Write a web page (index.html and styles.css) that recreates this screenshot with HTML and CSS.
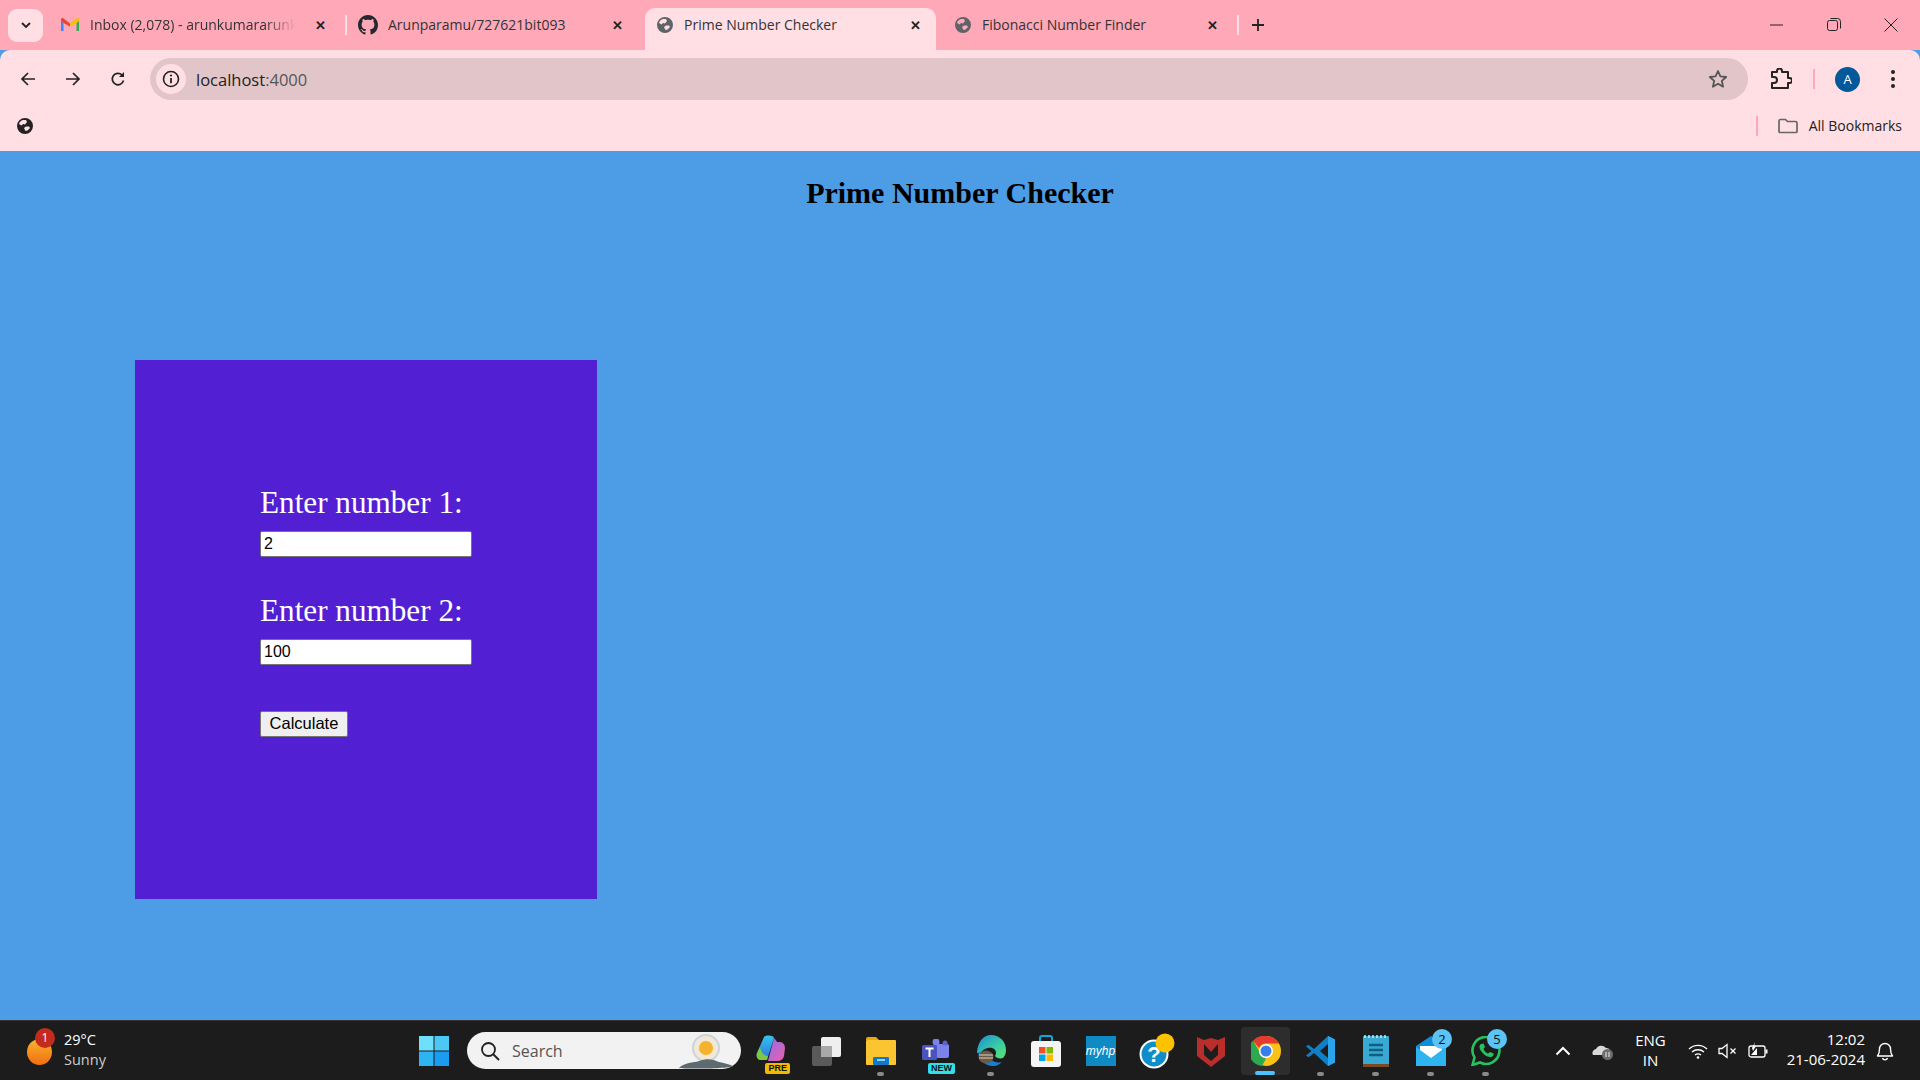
FILE: index.html
```html
<!DOCTYPE html>
<html lang="en">
<head>
    <meta charset="UTF-8">
    <title>Prime Number Checker</title>
    <link rel="stylesheet" href="styles.css">
</head>
<body>

    <!-- Browser tabs -->
    <div class="tabstrip">
        <div class="tab-search">
            <svg width="12" height="12" viewBox="0 0 12 12"><path d="M2 4l4 4 4-4" fill="none" stroke="#222" stroke-width="1.8"/></svg>
        </div>
        <div class="tab tab-gmail">
            <svg class="favicon" width="18" height="14" viewBox="0 0 18 14">
                <path d="M0 13V3l2.5 2v8z" fill="#4285f4"/>
                <path d="M18 13V3l-2.5 2v8z" fill="#34a853"/>
                <path d="M2.5 5L0 3V1.5C0 .2 1.5-.4 2.5.4L9 5.5V8.500z" fill="#ea4335"/>
                <path d="M15.5 5L18 3V1.5C18 .2 16.5-.4 15.5.4L9 5.5V8.500z" fill="#fbbc04"/>
            </svg>
            <span class="tab-title tab-fade">Inbox (2,078) - arunkumararunk</span>
            <span class="tab-close">&#10005;</span>
        </div>
        <div class="tab-sep"></div>
        <div class="tab tab-github">
            <svg class="favicon" width="20" height="20" viewBox="0 0 16 16"><path fill="#24292f" d="M8 0C3.580 0 0 3.580 0 8c0 3.540 2.290 6.530 5.470 7.590.4.070.55-.17.55-.38 0-.19-.01-.82-.01-1.490-2.010.37-2.530-.49-2.690-.94-.09-.23-.48-.94-.82-1.130-.28-.15-.68-.52-.01-.53.630-.01 1.080.58 1.230.82.720 1.210 1.870.87 2.330.66.070-.52.280-.87.510-1.070-1.780-.2-3.640-.89-3.640-3.950 0-.87.310-1.590.82-2.150-.08-.2-.36-1.020.08-2.120 0 0 .67-.21 2.200.82.640-.18 1.320-.27 2-.27s1.360.09 2 .27c1.530-1.040 2.200-.82 2.200-.82.440 1.100.16 1.920.08 2.120.51.560.82 1.270.82 2.150 0 3.070-1.870 3.750-3.650 3.950.29.250.54.730.54 1.480 0 1.070-.01 1.930-.01 2.200 0 .21.150.46.550.38A8.010 8.010 0 0 0 16 8c0-4.420-3.580-8-8-8z"/></svg>
            <span class="tab-title">Arunparamu/727621bit093</span>
            <span class="tab-close">&#10005;</span>
        </div>
        <div class="tab tab-active">
            <svg class="favicon" width="18" height="18" viewBox="0 0 18 18"><use href="#globe" fill="#5f6368"/></svg>
            <span class="tab-title">Prime Number Checker</span>
            <span class="tab-close">&#10005;</span>
        </div>
        <div class="tab tab-fib">
            <svg class="favicon" width="18" height="18" viewBox="0 0 18 18"><use href="#globe" fill="#5f6368"/></svg>
            <span class="tab-title">Fibonacci Number Finder</span>
            <span class="tab-close">&#10005;</span>
        </div>
        <div class="tab-sep"></div>
        <svg class="new-tab" width="14" height="14" viewBox="0 0 14 14"><path d="M7 1v12M1 7h12" stroke="#222" stroke-width="1.8"/></svg>

        <div class="win-controls">
            <svg width="14" height="14" viewBox="0 0 14 14"><path d="M0 7h13" stroke="#222" stroke-width="1"/></svg>
            <svg width="14" height="14" viewBox="0 0 14 14"><rect x=".5" y="2.5" width="10" height="10" rx="2" fill="none" stroke="#222"/><path d="M3.5 .5h7a3 3 0 0 1 3 3v7" fill="none" stroke="#222"/></svg>
            <svg width="14" height="14" viewBox="0 0 14 14"><path d="M.5 .5l13 13M13.5 .5l-13 13" stroke="#222"/></svg>
        </div>
    </div>

    <!-- Address bar -->
    <div class="toolbar">
        <div class="nav-buttons">
            <svg width="16" height="16" viewBox="0 0 16 16"><path d="M15 8H2M8 2L2 8l6 6" fill="none" stroke="#222" stroke-width="1.7"/></svg>
            <svg width="16" height="16" viewBox="0 0 16 16"><path d="M1 8h13M8 2l6 6-6 6" fill="none" stroke="#222" stroke-width="1.7"/></svg>
            <svg width="16" height="16" viewBox="0 0 16 16"><path d="M13.5 9.5A5.7 5.7 0 1 1 12 4" fill="none" stroke="#222" stroke-width="1.7"/><path d="M14 1v5H9z" fill="#222"/></svg>
        </div>
        <div class="omnibox">
            <div class="site-info">
                <svg width="18" height="18" viewBox="0 0 18 18"><circle cx="9" cy="9" r="7.5" fill="none" stroke="#222" stroke-width="1.6"/><path d="M9 8v5.2" stroke="#222" stroke-width="1.8"/><circle cx="9" cy="5.5" r="1.1" fill="#222"/></svg>
            </div>
            <span class="url">localhost<span class="url-port">:4000</span></span>
            <svg class="star" width="20" height="20" viewBox="0 0 20 20"><path d="M10 2l2.400 5.400 5.800.6-4.400 3.900 1.300 5.800L10 14.700l-5.100 3 1.300-5.800L1.800 8l5.800-.6z" fill="none" stroke="#555" stroke-width="1.8" stroke-linejoin="round"/></svg>
        </div>
        <svg class="puzzle" width="22" height="22" viewBox="0 0 22 22"><path d="M2 4h5V3a2.500 2.500 0 0 1 5 0v1h6v6h1.500a2.500 2.500 0 0 1 0 5H18v5H2v-5h2a2.500 2.500 0 0 0 0-6H2z" fill="none" stroke="#222" stroke-width="2" stroke-linejoin="round"/></svg>
        <div class="toolbar-sep"></div>
        <div class="avatar">A</div>
        <svg class="menu-dots" width="4" height="18" viewBox="0 0 4 18"><circle cx="2" cy="2" r="2" fill="#222"/><circle cx="2" cy="9" r="2" fill="#222"/><circle cx="2" cy="16" r="2" fill="#222"/></svg>
    </div>

    <!-- Bookmarks -->
    <div class="bookmarks">
        <svg width="18" height="18" viewBox="0 0 18 18"><use href="#globe" fill="#222"/></svg>
        <div class="bookmarks-right">
            <div class="bookmarks-sep"></div>
            <svg width="20" height="16" viewBox="0 0 20 16"><path d="M1 3a1.500 1.500 0 0 1 1.500-1.500h5l2 2h8A1.500 1.500 0 0 1 19 5v8.500a1 1 0 0 1-1 1H2a1 1 0 0 1-1-1z" fill="none" stroke="#666" stroke-width="1.7"/></svg>
            <span class="all-bookmarks">All Bookmarks</span>
        </div>
    </div>

    <!-- Page content -->
    <main class="page">
        <h1>Prime Number Checker</h1>
        <form class="calc-form" onsubmit="return false">
            <label for="num1">Enter number 1:</label>
            <input type="text" id="num1" value="2">
            <label for="num2">Enter number 2:</label>
            <input type="text" id="num2" value="100">
            <button type="submit">Calculate</button>
        </form>
    </main>

    <!-- Windows taskbar -->
    <footer class="taskbar">
        <div class="weather">
            <div class="weather-icon"><span class="weather-badge">1</span></div>
            <div class="weather-text"><span>29°C</span><span class="weather-sub">Sunny</span></div>
        </div>

        <div class="task-center">
            <svg class="task-icon" width="30" height="30" viewBox="0 0 30 30">
                <rect width="14.5" height="14.5" fill="#6fe0fb"/><rect x="15.5" width="14.5" height="14.5" fill="#4cc8f5"/>
                <rect y="15.5" width="14.5" height="14.5" fill="#2cb4f3"/><rect x="15.5" y="15.5" width="14.5" height="14.5" fill="#1a9cf0"/>
            </svg>
            <div class="searchbox">
                <svg width="20" height="20" viewBox="0 0 20 20"><circle cx="8.5" cy="8.5" r="6.5" fill="none" stroke="#222" stroke-width="1.8"/><path d="M13 13l6 6" stroke="#222" stroke-width="2"/></svg>
                <span>Search</span>
                <svg class="search-art" width="58" height="36" viewBox="0 0 58 36">
                    <circle cx="29" cy="15" r="13" fill="#f3e8d5" stroke="#c8d5dd" stroke-width="2"/>
                    <circle cx="29" cy="15" r="7" fill="#f5b22c"/>
                    <path d="M2 35c6-6 14-5 20-7 8-3 14-2 20 1 5 1 10 2 14 4-4 3-50 3-54 2z" fill="#5f6a70"/>
                </svg>
            </div>
            <div class="task-apps">
                <div class="app">
                    <svg width="30" height="32" viewBox="0 0 30 32">
                        <defs>
                            <linearGradient id="cpBlue" x1="0" y1="0" x2="0" y2="1"><stop offset="0" stop-color="#35c4ea"/><stop offset="1" stop-color="#2f6fe0"/></linearGradient>
                            <linearGradient id="cpPink" x1="0" y1="0" x2="1" y2="1"><stop offset="0" stop-color="#8f6df0"/><stop offset="1" stop-color="#ec5fa8"/></linearGradient>
                        </defs>
                        <path d="M8 2c2-2 9-2 10 1L11 25H5C1 25 0 21 1 18z" fill="url(#cpBlue)"/>
                        <path d="M18 3c1 1 2 2 3 4h3c3 0 5 3 5 6l-1 8c-1 4-4 5-7 5H12z" fill="url(#cpPink)"/>
                        <path d="M4 12c1 5 4 9 8 9l-1 4H5C1 25 0 21 1 18z" fill="#7bc943"/>
                    </svg>
                    <span class="app-tag tag-pre">PRE</span>
                </div>
                <div class="app">
                    <svg width="30" height="30" viewBox="0 0 30 30"><rect x="1" y="10" width="20" height="20" rx="2" fill="#5a5a5a"/><rect x="10" y="1" width="20" height="20" rx="2" fill="#efefef"/><rect x="10" y="10" width="11" height="11" fill="#a9a9a9"/></svg>
                </div>
                <div class="app app-open">
                    <svg width="30" height="30" viewBox="0 0 30 30"><path d="M0 3a2 2 0 0 1 2-2h8l3 3H0z" fill="#e8a90f"/><rect y="4" width="30" height="25" rx="1" fill="#fbc531"/><rect x="7" y="21" width="16" height="8" rx="1" fill="#0f78c8"/><rect x="11" y="23" width="8" height="2" fill="#8fd0f3"/></svg>
                </div>
                <div class="app">
                    <svg width="28" height="24" viewBox="0 0 28 24"><rect x="14" y="5" width="13" height="14" rx="2" fill="#7b83eb"/><circle cx="14" cy="3" r="3.5" fill="#7b83eb"/><circle cx="23" cy="4" r="2.5" fill="#5b62c8"/><rect y="6" width="15" height="15" rx="1.5" fill="#4b53bc"/><path d="M3.500 9.500h8M7.500 9.500v8.500" stroke="#fff" stroke-width="2"/></svg>
                    <span class="app-tag tag-new">NEW</span>
                </div>
                <div class="app app-open">
                    <svg width="30" height="32" viewBox="0 0 30 32">
                        <defs>
                            <linearGradient id="edgeSwirl" x1="0" y1="0" x2="1" y2="1"><stop offset="0" stop-color="#1a8ad8"/><stop offset=".6" stop-color="#3ad0a0"/><stop offset="1" stop-color="#5ee06a"/></linearGradient>
                        </defs>
                        <path d="M15 0c9 0 15 7 15 15 0 3-1 6-3 8-3 1-7 0-8-2 2-3 1-7-3-8-5-1-10 2-12 6-1-2-3 0-3-2C2 7 7 0 15 0z" fill="url(#edgeSwirl)"/>
                        <path d="M2 17c1 9 9 15 16 14 3 0 6-2 8-4-7 2-13-2-14-9-2 0-7 0-10-1z" fill="#157fd0"/>
                        <ellipse cx="10" cy="22" rx="7.500" ry="6.500" fill="#6a5a48"/>
                        <path d="M3 20h14M3 23h14" stroke="#d9d2c3"/>
                    </svg>
                </div>
                <div class="app">
                    <svg width="30" height="32" viewBox="0 0 30 32"><path d="M9 7V3a2 2 0 0 1 2-2h8a2 2 0 0 1 2 2v4" fill="none" stroke="#0fa7d8" stroke-width="2"/><rect y="6" width="30" height="26" rx="3" fill="#f4f4f4"/><rect x="8" y="12" width="6.500" height="6.500" fill="#f25022"/><rect x="15.500" y="12" width="6.500" height="6.500" fill="#7fba00"/><rect x="8" y="19.500" width="6.500" height="6.500" fill="#00a4ef"/><rect x="15.500" y="19.500" width="6.500" height="6.500" fill="#ffb900"/></svg>
                </div>
                <div class="app">
                    <div class="myhp">my<b>hp</b></div>
                </div>
                <div class="app">
                    <svg class="help-icon" width="36" height="36" viewBox="0 0 36 36"><circle cx="15" cy="21" r="13.5" fill="#0f8dc9" stroke="#fff" stroke-width="2"/><text class="help-mark" x="15" y="29" text-anchor="middle">?</text><circle cx="26" cy="10" r="9.5" fill="#fdc200"/></svg>
                </div>
                <div class="app">
                    <svg width="28" height="32" viewBox="0 0 28 32"><path d="M0 2l7 3 7-2 7 2 7-3v19L14 32 0 21z" fill="#b92d2a"/><path d="M7 9l7 8 7-8v11l-7 6-7-6z" fill="#1d1d1d"/></svg>
                </div>
                <div class="app app-chrome">
                    <svg width="30" height="30" viewBox="0 0 30 30">
                        <circle cx="15" cy="15" r="15" fill="#fbc116"/>
                        <path d="M15 0a15 15 0 0 1 13 7.500H15a7.500 7.500 0 0 0-7 4.500L2 4.500A15 15 0 0 1 15 0z" fill="#e33b2e"/>
                        <path d="M2 4.500l6.500 11.200A7.500 7.500 0 0 0 15 22.500L11 30A15 15 0 0 1 2 4.500z" fill="#2da94f"/>
                        <circle cx="15" cy="15" r="7" fill="#fff"/><circle cx="15" cy="15" r="5.500" fill="#3b7de8"/>
                    </svg>
                </div>
                <div class="app app-open">
                    <svg width="30" height="30" viewBox="0 0 30 30"><path d="M22 0l7 3.500v23L22 30 8 17l-5.500 4.200L0 19.500 5.500 15 0 10.500l2.500-1.700L8 13z" fill="#0f7fc6"/><path d="M22 8l-8 7 8 7z" fill="#1d1d1d"/><path d="M22 0l7 3.500v23L22 30z" fill="#2aa4ea"/></svg>
                </div>
                <div class="app app-open">
                    <svg width="26" height="32" viewBox="0 0 26 32"><rect y="1" width="26" height="31" rx="1" fill="#38a9d3"/><path d="M0 29h26v3H0z" fill="#7a4a25"/><path d="M2 0v3M6 0v3M10 0v3M14 0v3M18 0v3M22 0v3" stroke="#cdeaf5" stroke-width="1.5"/><path d="M6 10h14M6 15h14M6 20h14" stroke="#115f80" stroke-width="2.5"/></svg>
                </div>
                <div class="app app-open">
                    <svg width="30" height="30" viewBox="0 0 30 30"><path d="M0 10L15 0l15 10v20H0z" fill="#0f8ed8"/><path d="M4 10h22v11l-11 5-11-5z" fill="#fff"/><path d="M0 30V11l15 11 15-11v19z" fill="#30b4f0"/></svg>
                    <span class="app-badge">2</span>
                </div>
                <div class="app app-open">
                    <svg width="30" height="30" viewBox="0 0 30 30"><path d="M1.500 29l2-7.500A13.500 13.500 0 1 1 9 26.500z" fill="none" stroke="#25c35f" stroke-width="2.6"/><path d="M10 8c-2 1-2 4 0 7s6 6 9 6c3 0 4-2 3.500-3.500L19 16l-2 1.500c-2-1-3.500-2.500-4.500-4.500L14 11l-1.500-3.500z" fill="#25c35f"/></svg>
                    <span class="app-badge">5</span>
                </div>
            </div>
        </div>

        <div class="tray">
            <svg width="16" height="10" viewBox="0 0 16 10"><path d="M1.500 8.500L8 2l6.500 6.500" fill="none" stroke="#fff" stroke-width="2"/></svg>
            <svg class="tray-cloud" width="22" height="20" viewBox="0 0 22 20"><path d="M1 14a4 4 0 0 1 3-6 6 6 0 0 1 10-1 4 4 0 0 1 3 7z" fill="#d8d8d8"/><circle cx="15.500" cy="13.500" r="5.500" fill="#6d6d6d"/><path d="M14 11v5M17 11v5" stroke="#eee"/></svg>
            <div class="lang"><span>ENG</span><span>IN</span></div>
            <div class="tray-status">
                <svg width="20" height="16" viewBox="0 0 20 16"><path d="M1 6a13 13 0 0 1 18 0M4 9a9 9 0 0 1 12 0M7 12a5 5 0 0 1 6 0" fill="none" stroke="#fff" stroke-width="1.4"/><circle cx="10" cy="14.500" r="1.300" fill="#fff"/></svg>
                <svg width="20" height="16" viewBox="0 0 20 16"><path d="M1 5.500h3L9 1.500v13l-5-4H1z" fill="none" stroke="#fff" stroke-width="1.3"/><path d="M12.500 5.500l5 5M17.500 5.500l-5 5" stroke="#fff" stroke-width="1.3"/></svg>
                <svg width="21" height="18" viewBox="0 0 21 18"><rect x="1" y="4" width="16" height="11" rx="2" fill="none" stroke="#fff" stroke-width="1.3"/><path d="M18.500 7.500v4" stroke="#fff" stroke-width="2"/><path d="M3 13l6-7v7z" fill="#fff"/><path d="M4 6L7 0 6 4h2L5 9z" fill="#fff"/></svg>
            </div>
            <div class="clock"><span>12:02</span><span>21-06-2024</span></div>
            <svg class="bell" width="18" height="20" viewBox="0 0 18 20"><path d="M1.500 15c1.500-2 2-3 2-7a5.500 5.500 0 0 1 11 0c0 4 .5 5 2 7z" fill="none" stroke="#fff" stroke-width="1.4" stroke-linejoin="round"/><path d="M6.500 17a2.600 2.600 0 0 0 5 0" fill="none" stroke="#fff" stroke-width="1.4"/></svg>
        </div>
    </footer>

    <!-- Shared globe favicon -->
    <svg class="defs" width="0" height="0">
        <symbol id="globe" viewBox="0 0 18 18">
            <path fill-rule="evenodd" d="M9 1a8 8 0 1 1 0 16A8 8 0 0 1 9 1zM7 3C5 3.500 3.500 5 3 7l2.500 1.500L7 7l2 .5L11 5l-1-2zm3 6.500L8 11l1.500 3 2-.5L14 11l-1-1.500z"/>
        </symbol>
    </svg>

</body>
</html>
```

FILE: styles.css
```css
* {
    box-sizing: border-box;
}

body {
    margin: 0;
    height: 1080px;
    display: flex;
    flex-direction: column;
    overflow: hidden;
    background-color: #4d9de6;
    font-family: "Open Sans", "Liberation Sans", sans-serif;
}

.defs {
    position: absolute;
}

/* Tab strip */
.tabstrip {
    height: 50px;
    flex-shrink: 0;
    display: flex;
    align-items: center;
    background-color: #ffa9b8;
    padding-left: 8px;
}

.tab-search {
    width: 35px;
    height: 33px;
    margin-right: 18px;
    border-radius: 9px;
    background-color: #ffdfe4;
    display: flex;
    align-items: center;
    justify-content: center;
}

.tab {
    height: 42px;
    margin-top: 8px;
    padding-bottom: 8px;
    display: flex;
    align-items: center;
    flex-shrink: 0;
    font-size: 14px;
    color: #333;
}

.tab-gmail {
    width: 284px;
}

.tab-github {
    width: 298px;
    padding-left: 11px;
}

.tab-active {
    width: 291px;
    padding-left: 11px;
    background-color: #ffdfe4;
    border-radius: 10px 10px 0 0;
}

.tab-fib {
    width: 301px;
    padding-left: 18px;
}

.favicon {
    flex-shrink: 0;
    margin-right: 10px;
}

.tab-gmail .favicon {
    margin-right: 11px;
}

.tab-title {
    flex: 1;
    white-space: nowrap;
    overflow: hidden;
    line-height: 20px;
}

.tab-fade {
    -webkit-mask-image: linear-gradient(to right, #000 85%, transparent);
    mask-image: linear-gradient(to right, #000 85%, transparent);
}

.tab-close {
    width: 16px;
    margin: 0 17px 0 16px;
    font-size: 13px;
    font-weight: bold;
    line-height: 16px;
    text-align: center;
    color: #222;
}

.tab-github .tab-close {
    margin-right: 20px;
}

.tab-active .tab-close {
    margin-right: 13px;
}

.tab-sep {
    width: 2px;
    height: 20px;
    background-color: #ffdfe4;
    flex-shrink: 0;
}

.new-tab {
    margin-left: 12px;
}

.win-controls {
    margin-left: auto;
    display: flex;
    align-items: center;
    gap: 43px;
    padding-right: 22px;
}

/* Address bar */
.toolbar {
    height: 51px;
    flex-shrink: 0;
    display: flex;
    align-items: center;
    background-color: #ffdfe4;
    border-radius: 10px 10px 0 0;
    padding: 7px 25px 0 20px;
}

.nav-buttons {
    display: flex;
    align-items: center;
    gap: 29px;
    margin-right: 24px;
}

.omnibox {
    flex: 1;
    height: 42px;
    border-radius: 21px;
    background-color: #e2c5c9;
    display: flex;
    align-items: center;
    padding: 0 20px 0 6px;
}

.site-info {
    width: 30px;
    height: 30px;
    border-radius: 50%;
    background-color: #ffdfe4;
    display: flex;
    align-items: center;
    justify-content: center;
    margin-right: 10px;
}

.url {
    font-size: 16.5px;
    color: #222;
}

.url-port {
    color: #555;
}

.star {
    margin-left: auto;
}

.puzzle {
    margin-left: 22px;
}

.toolbar-sep {
    width: 2px;
    height: 20px;
    margin: 0 20px 0 21px;
    background-color: #ffa9b8;
}

.avatar {
    width: 25px;
    height: 25px;
    border-radius: 50%;
    background-color: #02589b;
    color: white;
    font-size: 13px;
    display: flex;
    align-items: center;
    justify-content: center;
}

.menu-dots {
    margin-left: 31px;
}

/* Bookmarks bar */
.bookmarks {
    height: 50px;
    flex-shrink: 0;
    display: flex;
    align-items: center;
    background-color: #ffdfe4;
    padding: 0 18px 0 16px;
}

.bookmarks-right {
    margin-left: auto;
    display: flex;
    align-items: center;
}

.bookmarks-sep {
    width: 2px;
    height: 20px;
    margin-right: 20px;
    background-color: #ffa9b8;
}

.all-bookmarks {
    margin-left: 11px;
    margin-bottom: 2px;
    font-size: 14px;
    color: #222;
}

/* Page */
.page {
    flex: 1;
    min-height: 0;
    font-family: "Liberation Serif", serif;
}

h1 {
    margin: 24px 0 0;
    text-align: center;
    font-size: 30px;
    font-weight: bold;
    line-height: 35px;
    color: black;
}

.calc-form {
    width: 462px;
    height: 539px;
    margin: 150px 0 0 135px;
    padding: 126px 125px 0;
    background-color: #531fd3;
    display: flex;
    flex-direction: column;
    align-items: flex-start;
}

.calc-form label {
    font-size: 31.2px;
    line-height: 34px;
    color: white;
    white-space: nowrap;
}

.calc-form input {
    width: 212px;
    height: 26px;
    margin: 11px 0 37px;
    padding: 1px 3px;
    border: 1px solid #767676;
    border-radius: 2px;
    background-color: white;
    font-family: "Liberation Sans", sans-serif;
    font-size: 16px;
}

.calc-form button {
    width: 88px;
    height: 26px;
    margin-top: 9px;
    padding: 0 0 2px;
    border: 1px solid #767676;
    border-radius: 2px;
    background-color: #efefef;
    font-family: "Liberation Sans", sans-serif;
    font-size: 16.5px;
}

/* Taskbar */
.taskbar {
    height: 60px;
    flex-shrink: 0;
    display: flex;
    align-items: center;
    background-color: #1c1c1c;
    border-top: 1px solid #333;
    color: white;
}

.weather {
    width: 419px;
    flex-shrink: 0;
    display: flex;
    align-items: center;
    padding-left: 27px;
    font-size: 14.5px;
}

.weather-icon {
    width: 25px;
    height: 26px;
    border-radius: 50%;
    background: linear-gradient(#f7b52d, #f26d11);
    position: relative;
    margin-right: 12px;
    margin-top: 2px;
}

.weather-badge {
    position: absolute;
    top: -11px;
    left: 8px;
    width: 20px;
    height: 20px;
    border-radius: 50%;
    background-color: #c42b1c;
    font-size: 12px;
    line-height: 20px;
    text-align: center;
}

.weather-text {
    display: flex;
    flex-direction: column;
    line-height: 20px;
    padding-bottom: 2px;
}

.weather-sub {
    color: #ccc;
}

.task-center {
    display: flex;
    align-items: center;
}

.searchbox {
    width: 274px;
    height: 37px;
    margin-left: 18px;
    border-radius: 19px;
    background-color: #f2f2f2;
    display: flex;
    align-items: center;
    padding-left: 13px;
    font-size: 16px;
    color: #555;
    position: relative;
}

.searchbox span {
    margin-left: 12px;
}

.search-art {
    position: absolute;
    right: 6px;
    top: 1px;
}

.task-apps {
    display: flex;
    align-items: center;
    margin-left: 2px;
}

.app {
    width: 55px;
    height: 54px;
    display: flex;
    align-items: center;
    justify-content: center;
    position: relative;
}

.app-open::after {
    content: "";
    position: absolute;
    bottom: 2px;
    left: 24px;
    width: 7px;
    height: 4px;
    border-radius: 2px;
    background-color: #8a8a8a;
}

/* Transparent border keeps the 55px slot but shows a smaller highlight */
.app-chrome {
    background-color: #2d2d2d;
    background-clip: padding-box;
    border: 3px solid transparent;
    border-radius: 7px;
}

.app-chrome::after {
    content: "";
    position: absolute;
    bottom: 0;
    left: 14px;
    width: 20px;
    height: 4px;
    border-radius: 2px;
    background-color: #4cc2ff;
}

.app-tag {
    position: absolute;
    bottom: 4px;
    right: 8px;
    padding: 0 3px;
    border-radius: 2px;
    font-family: "Liberation Sans", sans-serif;
    font-size: 9px;
    font-weight: bold;
    line-height: 11px;
    color: #111;
}

.tag-pre {
    background-color: #f5b800;
}

.tag-new {
    background-color: #30e0e8;
}

.app-badge {
    position: absolute;
    top: 5px;
    right: 6px;
    width: 20px;
    height: 20px;
    border-radius: 50%;
    background-color: #5cc3f5;
    color: #111;
    font-size: 13px;
    line-height: 20px;
    text-align: center;
}

.myhp {
    width: 30px;
    height: 30px;
    background-color: #0f8ac4;
    color: white;
    font-family: "Liberation Sans", sans-serif;
    font-size: 12px;
    font-style: italic;
    line-height: 30px;
    text-align: center;
}

.myhp b {
    font-weight: normal;
}

.help-icon {
    margin-left: 3px;
}

.help-mark {
    fill: white;
    font-family: "Liberation Sans", sans-serif;
    font-size: 22px;
    font-weight: bold;
}

.tray {
    margin-left: auto;
    display: flex;
    align-items: center;
    padding-right: 26px;
}

.tray-cloud {
    margin-left: 21px;
}

.lang {
    display: flex;
    flex-direction: column;
    align-items: center;
    margin-left: 21px;
    padding-bottom: 2px;
    font-size: 15px;
    line-height: 20px;
}

.tray-status {
    display: flex;
    align-items: center;
    gap: 10px;
    margin-left: 22px;
}

.clock {
    display: flex;
    flex-direction: column;
    align-items: flex-end;
    margin-left: 18px;
    padding-bottom: 4px;
    font-size: 15px;
    line-height: 20px;
}

.bell {
    margin-left: 11px;
}
```
